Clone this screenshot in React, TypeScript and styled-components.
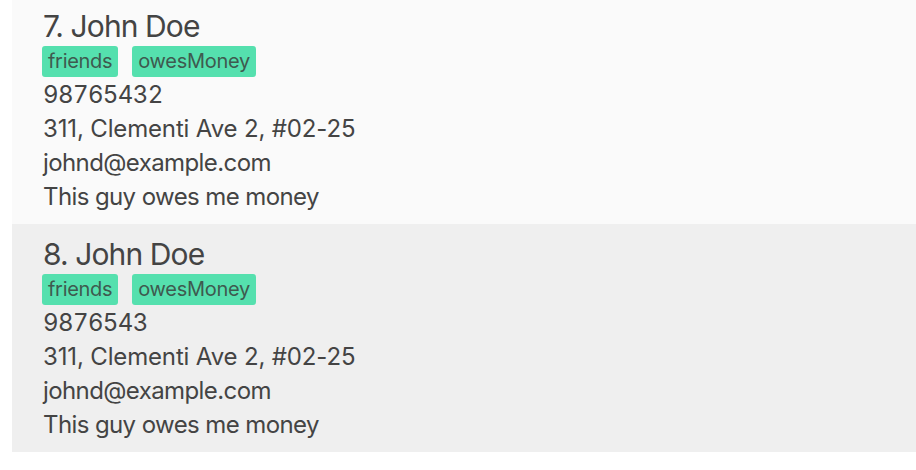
import styled, { createGlobalStyle } from 'styled-components';

const GlobalStyle = createGlobalStyle`
   html, body {
      margin: 0;
      padding: 0;
      background: #ffffff;
   }
`;

const List = styled.div`
   display: flex;
   flex-direction: column;
   padding-left: 12px;
   margin-top: -4px;
   font-family: Inter, 'Liberation Sans', sans-serif;
   color: #444444;
`;

const Card = styled.div<{ $odd: boolean }>`
   display: flex;
   flex-direction: column;
   height: 228px;
   box-sizing: border-box;
   padding: 12px 0 0 31px;
   background: ${({ $odd }) => ($odd ? '#fafafa' : '#efefef')};
`;

const Name = styled.div`
   font-size: 30px;
   line-height: 36px;
   letter-spacing: -0.9px;
`;

const Tags = styled.div`
   display: flex;
   gap: 14px;
   margin: 2px 0 1px -1px;
`;

const Tag = styled.span`
   height: 31px;
   box-sizing: border-box;
   padding: 0 6px;
   border-radius: 3px;
   background: #55e0ae;
   color: #3e5a4f;
   font-size: 20px;
   line-height: 31px;
   letter-spacing: -0.3px;
`;

const Line = styled.div<{ $spacing?: number; $tabular?: boolean }>`
   font-size: 24px;
   line-height: 34px;
   letter-spacing: ${({ $spacing = -0.6 }) => $spacing}px;
   font-variant-numeric: ${({ $tabular }) => ($tabular ? 'tabular-nums' : 'normal')};
`;

interface Person {
   index: number;
   name: string;
   tags: string[];
   phone: string;
   address: string;
   email: string;
   remark: string;
}

const people: Person[] = [
   {
      index: 7,
      name: 'John Doe',
      tags: ['friends', 'owesMoney'],
      phone: '98765432',
      address: '311, Clementi Ave 2, #02-25',
      email: 'johnd@example.com',
      remark: 'This guy owes me money',
   },
   {
      index: 8,
      name: 'John Doe',
      tags: ['friends', 'owesMoney'],
      phone: '9876543',
      address: '311, Clementi Ave 2, #02-25',
      email: 'johnd@example.com',
      remark: 'This guy owes me money',
   },
];

export default function App() {
   return (
      <>
         <GlobalStyle />
         <List>
            {people.map((p) => (
               <Card key={p.index} $odd={p.index % 2 === 1}>
                  <Name>
                     {p.index}. {p.name}
                  </Name>
                  <Tags>
                     {p.tags.map((t) => (
                        <Tag key={t}>{t}</Tag>
                     ))}
                  </Tags>
                  <Line $tabular>{p.phone}</Line>
                  <Line $spacing={-0.15}>{p.address}</Line>
                  <Line>{p.email}</Line>
                  <Line>{p.remark}</Line>
               </Card>
            ))}
         </List>
      </>
   );
}
